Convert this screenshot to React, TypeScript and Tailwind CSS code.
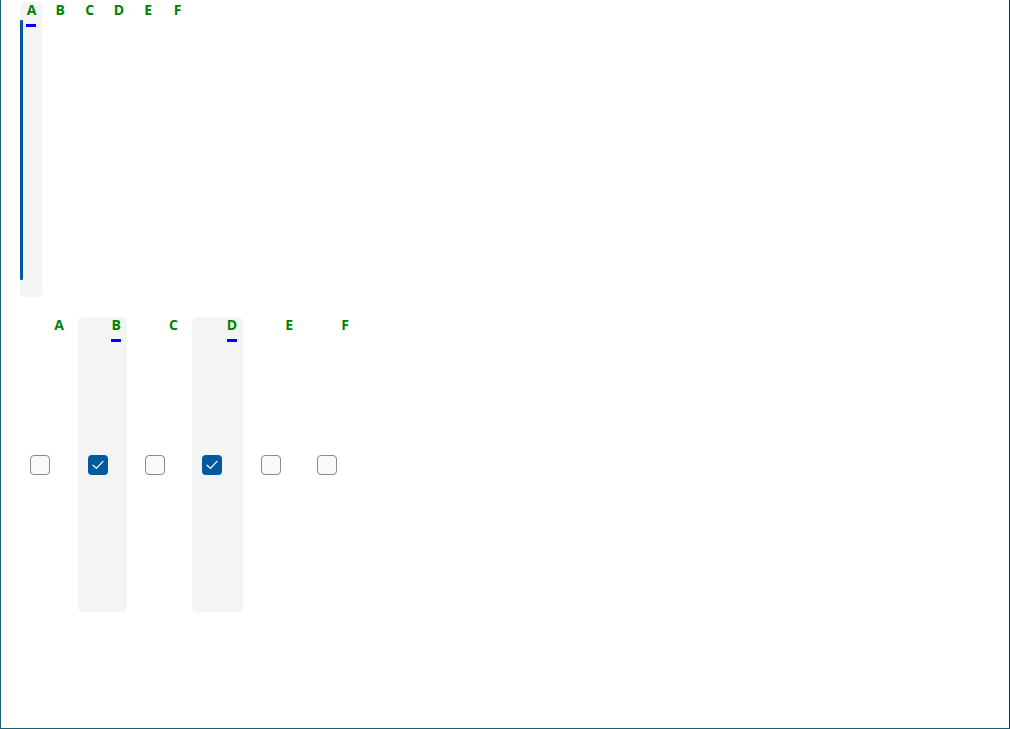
import React from "react";

const font = { fontFamily: '"Open Sans", "Noto Sans", "Liberation Sans", sans-serif' };

function Check({ checked }: { checked: boolean }) {
  if (checked) {
    return (
      <div className="w-[20px] h-[20px] rounded-[4px] bg-[#005a9e] flex items-center justify-center">
        <svg width="14" height="12" viewBox="0 0 14 12" fill="none">
          <path d="M2 6.2 L5.4 9.4 L12 2.4" stroke="white" strokeWidth="1.3" strokeLinecap="round" strokeLinejoin="round" />
        </svg>
      </div>
    );
  }
  return <div className="w-[20px] h-[20px] rounded-[4px] border border-[#8a8a8a] bg-[#f9f9f9]" />;
}

const bottomCols = [
  { l: "A", w: "w-[50px]", sel: false },
  { l: "B", w: "w-[49px]", sel: true },
  { l: "C", w: "w-[49px]", sel: false },
  { l: "D", w: "w-[51px]", sel: true },
  { l: "E", w: "w-[48px]", sel: false },
  { l: "F", w: "w-[48px]", sel: false },
];

export default function App() {
  return (
    <div
      className="w-[1010px] h-[729px] bg-white border-l border-b border-r border-l-[#1b5e78] border-b-[#1b5e78] border-r-[#1e3557] overflow-hidden"
      style={font}
    >
      <div className="pl-[19px] pt-[2px]">
        {/* top row */}
        <div className="flex gap-[7.3px] h-[295px]">
          <div className="w-[22px] h-[295px] rounded-[5px] bg-[#f4f4f4] flex flex-col">
            <div className="h-[16px] flex justify-center pl-[1px] text-[14px] leading-[16px] font-bold text-[#008000]">A</div>
            <div className="flex mt-[2px]">
              <div className="w-[3px] h-[260px] bg-[#005a9e] rounded-[1px]" />
              <div className="ml-[3px] mt-[4px] w-[10px] h-[3px] bg-[#0000ff]" />
            </div>
          </div>
          {["B", "C", "D", "E", "F"].map((l) => (
            <div key={l} className="w-[22px] h-[16px] flex justify-center text-[14px] leading-[16px] font-bold text-[#008000]">
              {l}
            </div>
          ))}
        </div>
        {/* bottom row */}
        <div className="flex gap-[8px] mt-[20px]">
          {bottomCols.map((c) => (
            <div
              key={c.l}
              className={`${c.w} h-[295px] rounded-[5px] flex flex-col ${c.sel ? "bg-[#f4f4f4]" : ""}`}
            >
              <div className="flex flex-col items-end pr-[6px]">
                <div className="text-[14px] leading-[16px] font-bold text-[#008000]">{c.l}</div>
                {c.sel ? <div className="mt-[6px] w-[10px] h-[3px] bg-[#0000ff]" /> : <div className="mt-[6px] h-[3px]" />}
              </div>
              <div className="flex-1 flex items-center pl-[10px] pb-[24px]">
                <Check checked={c.sel} />
              </div>
            </div>
          ))}
        </div>
      </div>
    </div>
  );
}
